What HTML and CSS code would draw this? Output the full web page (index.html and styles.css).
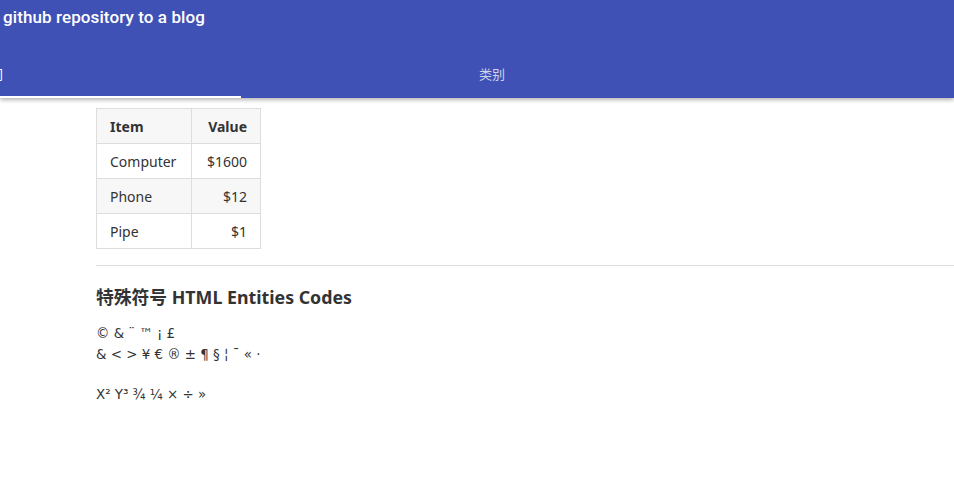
FILE: index.html
```html
<!DOCTYPE html>
<html>
<head>
<meta charset="utf-8">
<link rel="stylesheet" href="styles.css">
</head>
<body>
<header class="appbar">
  <div class="title">github repository to a blog</div>
  <nav class="tabs">
    <div class="tab active">时间</div>
    <div class="tab">类别</div>
  </nav>
</header>
<main class="content">
  <table class="data">
    <thead>
      <tr><th class="left">Item</th><th class="right">Value</th></tr>
    </thead>
    <tbody>
      <tr><td class="left">Computer</td><td class="right">$1600</td></tr>
      <tr class="alt"><td class="left">Phone</td><td class="right">$12</td></tr>
      <tr><td class="left">Pipe</td><td class="right">$1</td></tr>
    </tbody>
  </table>
  <hr class="rule">
  <h3 class="heading">特殊符号 HTML Entities Codes</h3>
  <p class="para">&copy; &amp; &uml; &trade; &iexcl; &pound;<br>&amp; &lt; &gt; &yen; &euro; &reg; &plusmn; &para; &sect; &brvbar; &macr; &laquo; &middot;</p>
  <p class="para">X&sup2; Y&sup3; &frac34; &frac14; &times; &divide; &raquo;</p>
</main>
</body>
</html>
```
FILE: styles.css
```css
html, body {
  margin: 0;
  padding: 0;
  background: #fff;
  overflow: hidden;
}
body {
  font-family: "Noto Sans", "Noto Sans CJK SC", sans-serif;
  color: #333;
}
.appbar {
  background: #3f51b5;
  height: 98px;
  box-shadow: 0 2px 4px rgba(0,0,0,0.3);
  position: relative;
  z-index: 1;
}
.title {
  height: 48px;
  padding-left: 3px;
  padding-top: 6px;
  box-sizing: border-box;
  font-family: Roboto, "Noto Sans CJK SC", sans-serif;
  font-weight: 500;
  font-size: 17px;
  letter-spacing: 0.1px;
  color: #fff;
  line-height: 22px;
}
.tabs {
  display: flex;
  margin-left: -261px;
  height: 50px;
}
.tab {
  width: 502px;
  flex: none;
  display: flex;
  align-items: center;
  justify-content: center;
  font-family: "Noto Sans CJK SC", sans-serif;
  font-size: 13px;
  color: rgba(255,255,255,0.75);
  box-sizing: border-box;
}
.tab.active {
  color: #fff;
  border-bottom: 2px solid #fff;
  padding-top: 2px;
}
.content {
  padding: 10px 0 0 96px;
}
.data {
  border-collapse: collapse;
  font-size: 14px;
}
.data th, .data td {
  border: 1px solid #ddd;
  height: 35px;
  padding: 0 13px;
  box-sizing: border-box;
}
.data th {
  font-weight: 700;
  background: #f7f7f7;
}
.data tr.alt td {
  background: #f7f7f7;
}
.data .left { text-align: left; width: 95px; }
.data .right { text-align: right; width: 69px; }
.rule {
  border: 0;
  border-top: 1px solid #ddd;
  margin: 16px 0 0 0;
}
.heading {
  font-size: 17.8px;
  font-weight: 700;
  margin: 19px 0 0 0;
  line-height: 24px;
}
.para {
  font-family: "DejaVu Sans", "Noto Sans CJK SC", sans-serif;
  font-size: 13.4px;
  line-height: 21px;
  margin: 14px 0 0 0;
  color: #333;
}
.para + .para {
  margin-top: 19px;
}
```
